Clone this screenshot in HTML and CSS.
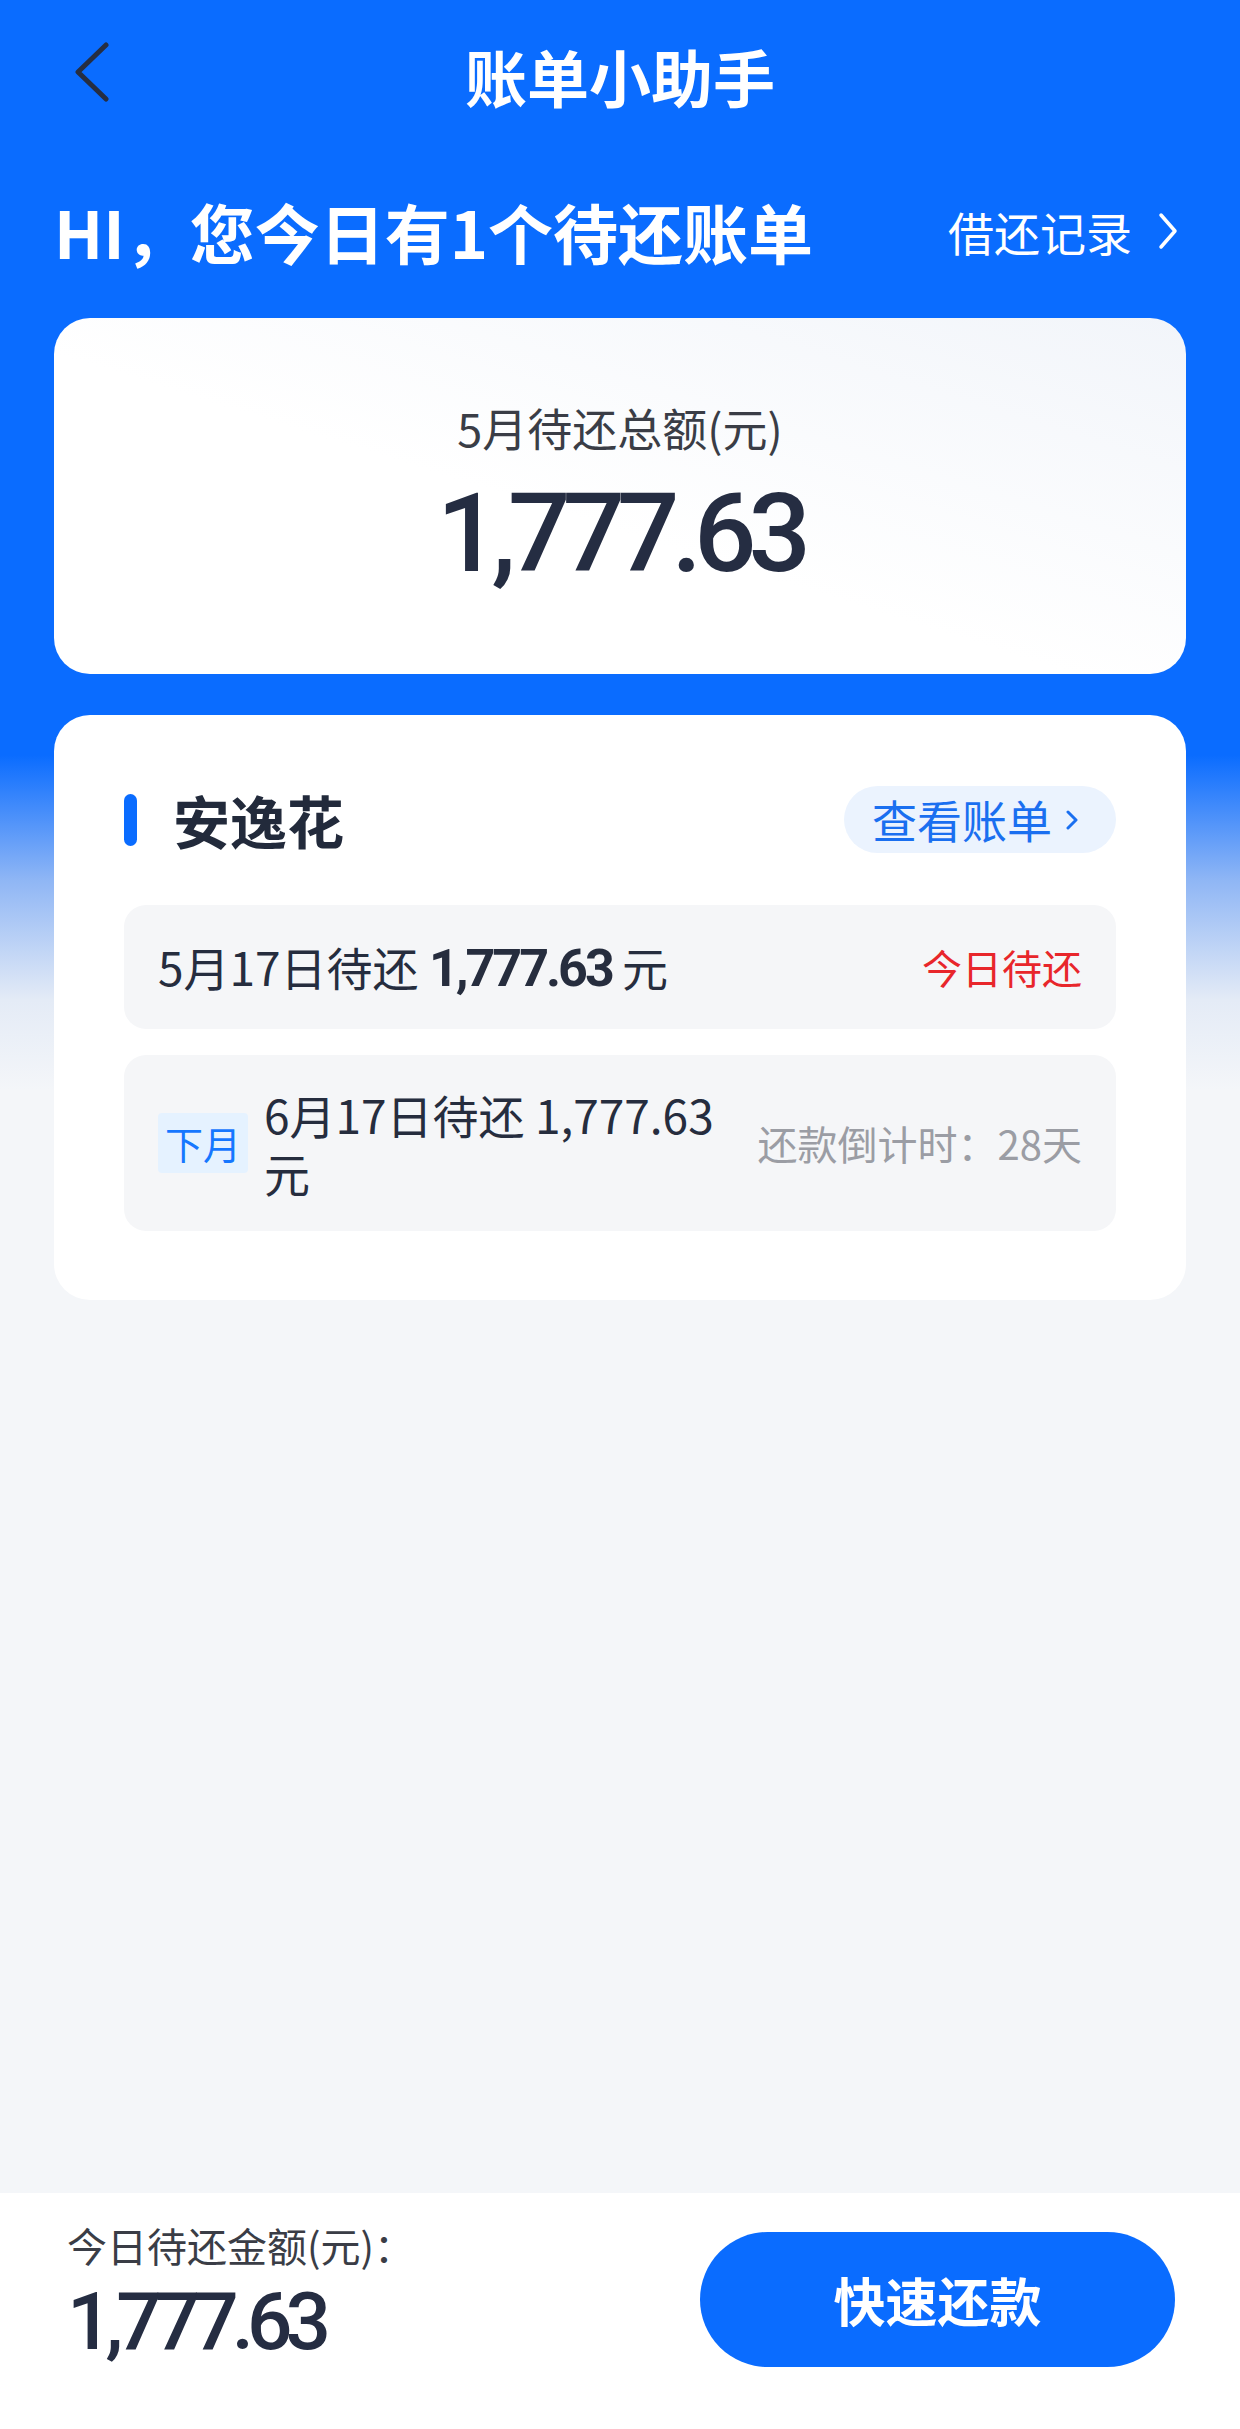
FILE: index.html
```html
<!DOCTYPE html>
<html lang="zh-CN">
<head>
	<meta charset="UTF-8">
	<title>账单小助手</title>
	<link rel="stylesheet" href="styles.css">
</head>
<body>
	<div class="page">
		<div class="nav">
			<span class="back">
				<svg width="36" height="60" viewBox="0 0 36 60"><polyline points="32,3 4,30 32,57" fill="none" stroke="#262e42" stroke-width="5" stroke-linecap="round" stroke-linejoin="round"/></svg>
			</span>
			<h1 class="nav-title">账单小助手</h1>
			<span></span>
		</div>

		<div class="greet">
			<h2>HI，您今日有1个待还账单</h2>
			<a class="record" href="#">借还记录<svg width="20" height="38" viewBox="0 0 20 38"><polyline points="3,3 17,19 3,35" fill="none" stroke="#fff" stroke-width="3.5" stroke-linecap="round" stroke-linejoin="round"/></svg></a>
		</div>

		<div class="total-card">
			<p class="total-label">5月待还总额(元)</p>
			<p class="total-num">1,777.63</p>
		</div>

		<div class="bill-card">
			<div class="bill-head">
				<h3 class="bill-name">安逸花</h3>
				<a class="bill-link" href="#">查看账单<svg width="12" height="22" viewBox="0 0 12 22"><polyline points="2,3 10,11 2,19" fill="none" stroke="#1a6ff0" stroke-width="3" stroke-linecap="round" stroke-linejoin="round"/></svg></a>
			</div>
			<div class="bill-row">
				<p class="row-text">5月17日待还 <b>1,777.63</b> 元</p>
				<span class="row-red">今日待还</span>
			</div>
			<div class="bill-row next">
				<span class="tag">下月</span>
				<p class="row-text">6月17日待还 1,777.63 元</p>
				<span class="row-gray">还款倒计时：28天</span>
			</div>
		</div>

		<div class="main"></div>

		<div class="footer">
			<div class="foot-info">
				<p class="foot-label">今日待还金额(元)：</p>
				<p class="foot-num">1,777.63</p>
			</div>
			<button class="pay-btn">快速还款</button>
		</div>
	</div>
</body>
</html>
```

FILE: styles.css
```css
body,p,h1,h2,h3{margin: 0;padding: 0;}
body{font-family: "Noto Sans CJK SC", sans-serif;background-color: #f4f6f9;}
a{text-decoration: none;}
.page{width: 1240px;min-height: 2429px;display: flex;flex-direction: column;background: linear-gradient(180deg, #0a6cff 0, #0a6cff 755px, #8fb6f5 880px, #e4ebf6 1000px, #f4f6f9 1090px, #f4f6f9 100%);}

/* 顶部导航 */
.nav{height: 152px;display: grid;grid-template-columns: 1fr auto 1fr;align-items: center;}
.back{padding-left: 74px;display: flex;margin-top: -8px;}
.nav-title{font-size: 62px;font-weight: 700;color: #fff;line-height: 1;}

.greet{height: 166px;box-sizing: border-box;padding: 0 62px 8px 54px;display: flex;align-items: center;justify-content: space-between;}
.greet h2{font-size: 65px;font-weight: 700;color: #fff;line-height: 1;}
.record{display: flex;align-items: center;gap: 26px;font-size: 46px;color: #fff;line-height: 1;}

/* 总额 */
.total-card{margin: 0 54px;height: 356px;box-sizing: border-box;border-radius: 36px;background: linear-gradient(to bottom left, #f2f5fa 0, #fff 55%);display: flex;flex-direction: column;align-items: center;justify-content: center;}
.total-label{font-size: 45px;line-height: 60px;color: #3a3d46;}
.total-num{margin-top: 16px;font-family: Roboto, sans-serif;font-weight: 500;font-size: 110px;line-height: 120px;letter-spacing: -8px;color: #252d42;}

/* 账单卡片 */
.bill-card{margin: 41px 54px 0;padding: 71px 70px 69px;background-color: #fff;border-radius: 36px;}
.bill-head{height: 67px;margin-bottom: 52px;display: flex;align-items: center;justify-content: space-between;}
.bill-name{display: flex;align-items: center;font-size: 57px;font-weight: 700;color: #222a3b;line-height: 1;}
.bill-name::before{content: "";width: 13px;height: 52px;border-radius: 7px;background-color: #0a6cff;margin-right: 36px;}
.bill-link{height: 67px;box-sizing: border-box;padding: 0 38px 0 28px;border-radius: 34px;background-color: #ebf3fe;color: #1a6ff0;font-size: 45px;display: flex;align-items: center;gap: 14px;}

.bill-row{min-height: 124px;box-sizing: border-box;padding: 0 34px;background-color: #f5f6f8;border-radius: 22px;display: flex;align-items: center;}
.bill-row + .bill-row{margin-top: 26px;}
.bill-row.next{min-height: 176px;padding: 30px 34px;}
.row-text{flex: 1;font-size: 46px;line-height: 58px;color: #262d3e;}
.row-text b{font-family: Roboto, sans-serif;font-size: 52px;font-weight: 700;letter-spacing: -3px;}
.row-red{font-size: 40px;color: #e8262b;}
.tag{margin-right: 16px;padding: 0 7px;line-height: 60px;font-size: 38px;color: #1677ff;background-color: #e5f2ff;border-radius: 4px;}
.row-gray{margin-left: 30px;font-size: 40px;color: #9b9da4;}

.main{flex: 1;}

/* 底部 */
.footer{height: 236px;box-sizing: border-box;padding: 39px 65px 0 67px;background-color: #fff;display: flex;align-items: flex-start;justify-content: space-between;}
.foot-info{margin-top: -10px;}
.foot-label{font-size: 40px;line-height: 46px;color: #3a3d46;}
.foot-num{margin-top: 4px;font-family: Roboto, sans-serif;font-weight: 500;font-size: 80px;line-height: 100px;letter-spacing: -7px;color: #252d42;}
.pay-btn{width: 475px;height: 135px;border: 0;border-radius: 68px;background-color: #0a6cff;color: #fff;font-family: inherit;font-size: 52px;font-weight: 700;cursor: pointer;}
```
